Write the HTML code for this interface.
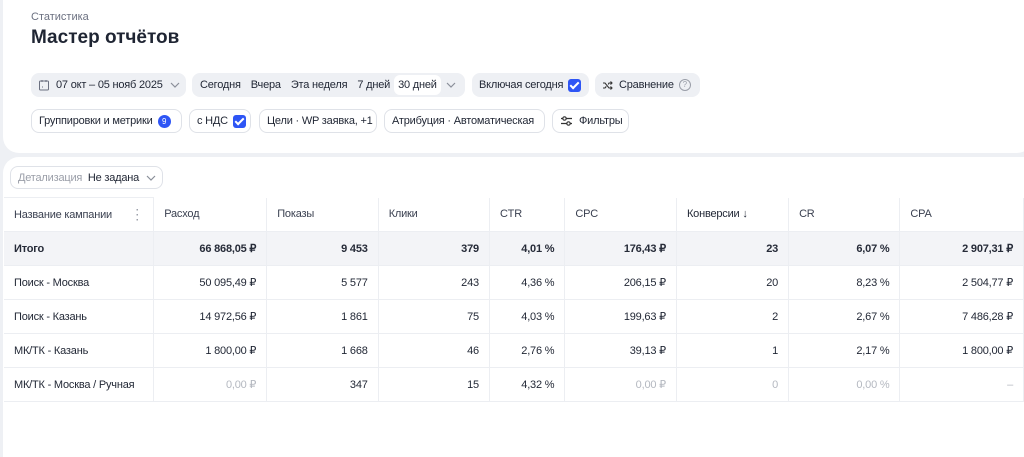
<!DOCTYPE html>
<html><head><meta charset="utf-8"><style>
*{box-sizing:border-box;margin:0;padding:0}
body{width:1024px;height:441px;overflow:hidden;background:#eef0f4;font-family:"Liberation Sans",sans-serif;color:#1f2533;position:relative}
.card1{position:absolute;left:3px;top:0;width:1030px;height:153px;background:#fff;border-radius:0 0 16px 16px}
.card2{position:absolute;left:3px;top:157px;width:1030px;height:300px;background:#fff;border-radius:16px 0 0 0}
.abs{position:absolute}
.chip{position:absolute;height:24px;border-radius:8px;font-size:11px;letter-spacing:-0.2px;display:flex;align-items:center;padding:0 7px;white-space:nowrap;color:#1f2533;overflow:visible}
.chip>*{flex-shrink:0}
.g{background:#eef0f4}
.o{border:1px solid #dfe2e8;background:#fff}
.cb{display:inline-block;width:13px;height:13px;border-radius:3px;background:#2e55f5;margin-left:5px;position:relative}
.cb:after{content:"";position:absolute;left:4px;top:1px;width:3px;height:7px;border:solid #fff;border-width:0 2px 2px 0;transform:rotate(45deg)}
.chev{margin-left:7px}
table{position:absolute;left:4px;top:197px;border-collapse:collapse;font-size:11px;letter-spacing:-0.2px;table-layout:fixed}
td,th{height:34px;border-right:1px solid #eceef2;border-bottom:1px solid #eceef2;padding:0 10px;text-align:right;white-space:nowrap;overflow:hidden}
th{font-weight:normal;text-align:left;color:#3a4050}
td:first-child,th:first-child{text-align:left}
tr.tot td{background:#f3f4f7;font-weight:bold;color:#262b38}
.mute{color:#b4b8c0}
</style></head><body>
<div class="card1"></div>
<div class="abs" style="left:31px;top:11px;font-size:11px;color:#6b7080">Статистика</div>
<div class="abs" style="left:31px;top:27px;font-size:19px;font-weight:bold;color:#1f2533">Мастер отчётов</div>

<svg width="0" height="0" style="position:absolute"><defs><symbol id="chv" viewBox="0 0 10 6"><path d="M1 1l4 4 4-4" fill="none" stroke="#8a8f99" stroke-width="1.2"/></symbol></defs></svg>

<div class="chip g" style="left:31px;top:73px;width:155px">
<svg width="12" height="12" viewBox="0 0 12 12" style="margin-right:6px"><rect x="1.5" y="2" width="9" height="9" rx="1" fill="none" stroke="#6b7080"/><path d="M4 1v2M8 1v2M4 8h1" stroke="#6b7080"/></svg>07 окт – 05 нояб 2025<svg class="chev" width="10" height="6"><use href="#chv"/></svg></div>
<div class="chip g" style="left:192px;top:73px;width:273px;padding-left:8px">
<span>Сегодня</span><span style="margin-left:10px">Вчера</span><span style="margin-left:10px">Эта неделя</span><span style="margin-left:10px">7 дней</span><span style="margin-left:4px;background:#fff;border-radius:6px;padding:4px 4px">30 дней</span><svg style="margin-left:5px" width="10" height="6"><use href="#chv"/></svg></div>
<div class="chip g" style="left:472px;top:73px;width:117px">Включая сегодня<span class="cb"></span></div>
<div class="chip g" style="left:595px;top:73px;width:105px"><svg width="11" height="11" viewBox="0 0 11 11" style="margin-right:6px"><path d="M1 3h2l4 5h3M1 8h2l1.3-1.6M6.2 4.5L7 3h3M8.5 1.5L10 3 8.5 4.5M8.5 6.5L10 8 8.5 9.5" fill="none" stroke="#333" stroke-width="1.1"/></svg>Сравнение<span style="display:inline-block;width:12px;height:12px;border:1px solid #9a9ea8;border-radius:50%;font-size:8px;text-align:center;line-height:10px;color:#9a9ea8;margin-left:5px">?</span></div>

<div class="chip o" style="left:31px;top:109px;width:151px">Группировки и метрики<span style="display:inline-block;width:13px;height:13px;border-radius:50%;background:#2e55f5;color:#fff;font-size:8px;text-align:center;line-height:13px;margin-left:5px">9</span></div>
<div class="chip o" style="left:189px;top:109px;width:62px">с НДС<span class="cb"></span></div>
<div class="chip o" style="left:259px;top:109px;width:118px">Цели · WP заявка, +1</div>
<div class="chip o" style="left:384px;top:109px;width:161px">Атрибуция · Автоматическая</div>
<div class="chip o" style="left:552px;top:109px;width:77px">
<svg width="13" height="12" viewBox="0 0 13 12" style="margin-right:6px"><path d="M1 3.5h11M1 8.5h11" stroke="#333" stroke-width="1.3"/><circle cx="4.5" cy="3.5" r="1.7" fill="#fff" stroke="#333" stroke-width="1.2"/><circle cx="8.5" cy="8.5" r="1.7" fill="#fff" stroke="#333" stroke-width="1.2"/></svg>Фильтры</div>

<div class="card2"></div>
<div class="chip o" style="left:10px;top:166px;width:153px;height:23px"><span style="color:#9a9ea8">Детализация</span>&nbsp;&nbsp;Не задана<svg class="chev" width="10" height="6"><use href="#chv"/></svg></div>

<table>
<colgroup><col style="width:150px"><col style="width:114px"><col style="width:113px"><col style="width:113px"><col style="width:76px"><col style="width:113px"><col style="width:113px"><col style="width:113px"><col style="width:125px"></colgroup>
<tr><th style="border-top:1px solid #eceef2">Название кампании<span style="float:right;color:#9a9ea8;font-size:14px;line-height:10px;letter-spacing:-1px">⋮</span></th><th>Расход</th><th>Показы</th><th>Клики</th><th>CTR</th><th>CPC</th><th style="color:#1f2533">Конверсии ↓</th><th>CR</th><th>CPA</th></tr>
<tr class="tot"><td>Итого</td><td>66 868,05 ₽</td><td>9 453</td><td>379</td><td>4,01 %</td><td>176,43 ₽</td><td>23</td><td>6,07 %</td><td>2 907,31 ₽</td></tr>
<tr><td>Поиск - Москва</td><td>50 095,49 ₽</td><td>5 577</td><td>243</td><td>4,36 %</td><td>206,15 ₽</td><td>20</td><td>8,23 %</td><td>2 504,77 ₽</td></tr>
<tr><td>Поиск - Казань</td><td>14 972,56 ₽</td><td>1 861</td><td>75</td><td>4,03 %</td><td>199,63 ₽</td><td>2</td><td>2,67 %</td><td>7 486,28 ₽</td></tr>
<tr><td>МК/ТК - Казань</td><td>1 800,00 ₽</td><td>1 668</td><td>46</td><td>2,76 %</td><td>39,13 ₽</td><td>1</td><td>2,17 %</td><td>1 800,00 ₽</td></tr>
<tr><td>МК/ТК - Москва / Ручная</td><td class="mute">0,00 ₽</td><td>347</td><td>15</td><td>4,32 %</td><td class="mute">0,00 ₽</td><td class="mute">0</td><td class="mute">0,00 %</td><td class="mute">–</td></tr>
</table>
</body></html>
